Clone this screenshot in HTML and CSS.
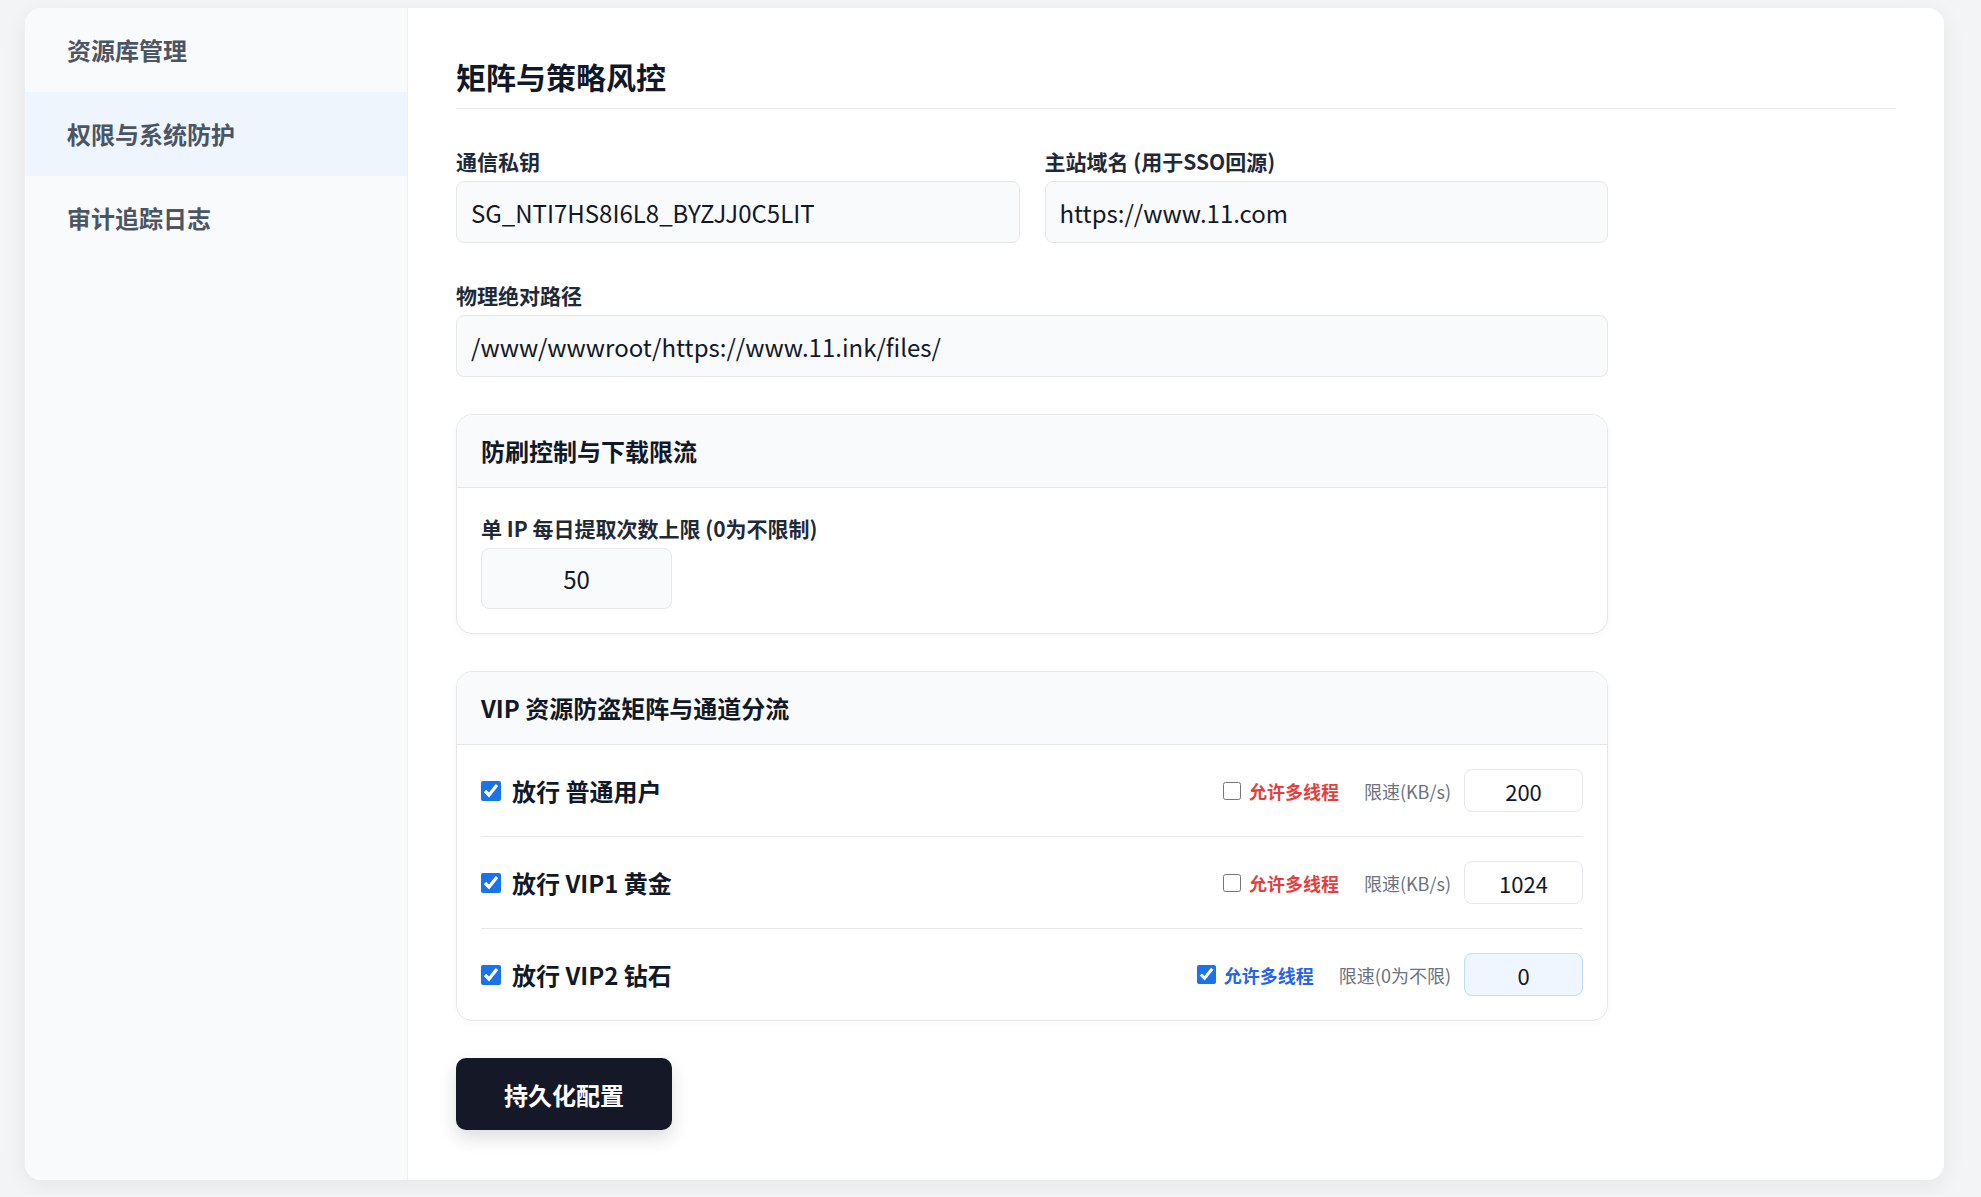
FILE: index.html
```html
<!DOCTYPE html>
<html lang="zh-CN">
<head>
    <meta charset="UTF-8">
    <meta name="viewport" content="width=device-width, initial-scale=1.0">
    <title>矩阵与策略风控</title>
    <link rel="stylesheet" href="styles.css">
</head>
<body>
    <div class="panel">
        <aside class="sidebar">
            <div class="nav-item">资源库管理</div>
            <div class="nav-item active">权限与系统防护</div>
            <div class="nav-item">审计追踪日志</div>
        </aside>

        <main class="main">
            <h2 class="page-title">矩阵与策略风控</h2>

            <div class="form">
                <div class="row-2">
                    <div class="field">
                        <label>通信私钥</label>
                        <input type="text" class="text-input" value="SG_NTI7HS8I6L8_BYZJJ0C5LIT">
                    </div>
                    <div class="field">
                        <label>主站域名 (用于SSO回源)</label>
                        <input type="text" class="text-input" value="https://www.11.com">
                    </div>
                </div>

                <div class="field">
                    <label>物理绝对路径</label>
                    <input type="text" class="text-input" value="/www/wwwroot/https://www.11.ink/files/">
                </div>

                <div class="box">
                    <div class="box-head">防刷控制与下载限流</div>
                    <div class="box-body">
                        <label>单 IP 每日提取次数上限 (0为不限制)</label>
                        <input type="text" class="text-input small" value="50">
                    </div>
                </div>

                <div class="box">
                    <div class="box-head">VIP 资源防盗矩阵与通道分流</div>
                    <div class="box-body rows">
                        <div class="vip-row">
                            <label class="allow"><input type="checkbox" checked> 放行 普通用户</label>
                            <div class="opts">
                                <label class="multi off"><input type="checkbox"> 允许多线程</label>
                                <span class="speed">限速(KB/s)</span>
                                <input type="text" class="speed-input" value="200">
                            </div>
                        </div>
                        <div class="vip-row">
                            <label class="allow"><input type="checkbox" checked> 放行 VIP1 黄金</label>
                            <div class="opts">
                                <label class="multi off"><input type="checkbox"> 允许多线程</label>
                                <span class="speed">限速(KB/s)</span>
                                <input type="text" class="speed-input" value="1024">
                            </div>
                        </div>
                        <div class="vip-row">
                            <label class="allow"><input type="checkbox" checked> 放行 VIP2 钻石</label>
                            <div class="opts">
                                <label class="multi on"><input type="checkbox" checked> 允许多线程</label>
                                <span class="speed">限速(0为不限)</span>
                                <input type="text" class="speed-input unlimited" value="0">
                            </div>
                        </div>
                    </div>
                </div>

                <button class="save-btn">持久化配置</button>
            </div>
        </main>
    </div>
</body>
</html>
```

FILE: styles.css
```css
body {
    margin: 0;
    padding: 8px 37px 15px 25px;
    background: #f3f4f6;
    font-family: "Noto Sans CJK SC", "Noto Sans", sans-serif;
    color: #111827;
}
.panel {
    display: flex;
    background: #fff;
    border-radius: 16px;
    box-shadow: 0 6px 24px rgba(0, 0, 0, 0.06);
    overflow: hidden;
}
.sidebar {
    width: 382px;
    flex-shrink: 0;
    background: #f8fafc;
    border-right: 1px solid #eceff3;
}
.nav-item {
    height: 84px;
    display: flex;
    align-items: center;
    padding-left: 42px;
    padding-bottom: 2px;
    box-sizing: border-box;
    font-size: 24px;
    font-weight: bold;
    color: #4b5563;
}
.nav-item.active {
    background: #eff5fd;
}
.main {
    flex: 1;
    padding: 46px 48px 50px 48px;
}
.page-title {
    margin: 0;
    font-size: 30px;
    line-height: 44px;
    padding-bottom: 10px;
    border-bottom: 1px solid #e5e7eb;
}
.form {
    max-width: 1152px;
    padding-top: 37px;
}
.row-2 {
    display: grid;
    grid-template-columns: 1fr 1fr;
    gap: 25px;
}
.field {
    margin-bottom: 37px;
}
label {
    display: block;
    font-size: 21px;
    line-height: 30px;
    font-weight: bold;
    color: #1f2937;
    margin-bottom: 5px;
}
.text-input {
    box-sizing: border-box;
    width: 100%;
    height: 62px;
    padding: 0 14px;
    font-family: inherit;
    font-size: 24px;
    color: #111827;
    background: #f9fafb;
    border: 1px solid #e5e7eb;
    border-radius: 8px;
}
.text-input.small {
    width: 191px;
    height: 61px;
    text-align: center;
}
.box {
    border: 1px solid #e5e7eb;
    border-radius: 16px;
    box-shadow: 0 2px 6px rgba(0, 0, 0, 0.03);
    margin-bottom: 37px;
    overflow: hidden;
}
.box-head {
    background: #f9fafb;
    border-bottom: 1px solid #e5e7eb;
    padding: 20px 24px;
    font-size: 24px;
    line-height: 32px;
    font-weight: bold;
}
.box-body {
    padding: 25px 24px 24px;
}
.box-body.rows {
    padding: 0 24px;
}
.vip-row {
    display: flex;
    align-items: center;
    justify-content: space-between;
    padding: 24px 0;
    border-bottom: 1px solid #e5e7eb;
}
.vip-row:last-child {
    border-bottom: none;
}
.allow {
    display: flex;
    align-items: center;
    gap: 11px;
    margin: 0;
    font-size: 24px;
    color: #111827;
}
.allow input {
    width: 20px;
    height: 20px;
    margin: 0;
    accent-color: #1a73e8;
}
.opts {
    display: flex;
    align-items: center;
}
.multi {
    display: flex;
    align-items: center;
    gap: 8px;
    margin: 0 25px 0 0;
    font-size: 18px;
}
.multi input {
    width: 18px;
    height: 18px;
    margin: 0;
    accent-color: #1a73e8;
}
.multi.off {
    color: #e53e3e;
}
.multi.on {
    color: #2563eb;
}
.multi.on input {
    width: 19px;
    height: 19px;
}
.speed {
    font-size: 18px;
    color: #6b7280;
    margin-right: 13px;
}
.speed-input {
    box-sizing: border-box;
    width: 119px;
    height: 43px;
    font-family: inherit;
    font-size: 22px;
    text-align: center;
    color: #111827;
    background: #fff;
    border: 1px solid #e5e7eb;
    border-radius: 8px;
}
.speed-input.unlimited {
    background: #eff6ff;
    border-color: #bfdbfe;
}
.save-btn {
    width: 216px;
    height: 72px;
    font-family: inherit;
    font-size: 24px;
    font-weight: bold;
    color: #fff;
    background: #141827;
    border: none;
    border-radius: 10px;
    box-shadow: 0 8px 18px rgba(17, 24, 39, 0.15);
    cursor: pointer;
}
```
